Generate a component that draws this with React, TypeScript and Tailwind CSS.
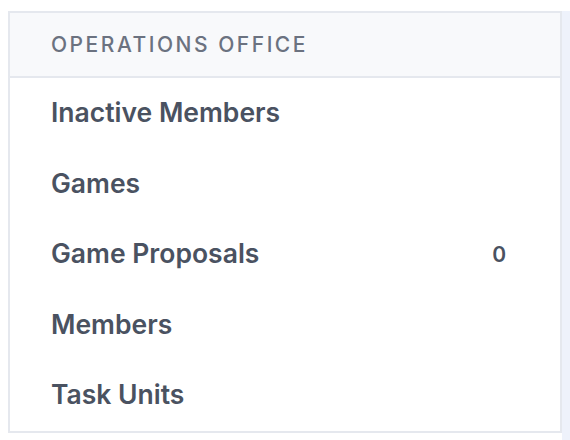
const items: { label: string; count?: number }[] = [
  { label: 'Inactive Members' },
  { label: 'Games' },
  { label: 'Game Proposals', count: 0 },
  { label: 'Members' },
  { label: 'Task Units' },
]

export default function App() {
  return (
    <div className="h-[440px] w-[570px] overflow-hidden bg-white pt-[11px] pl-[8px] font-['Inter',sans-serif]">
      <div className="flex h-full items-stretch">
        <section className="w-[554px] h-[422px] border-2 border-[#e5e8ee] bg-white">
          <header className="flex h-[65px] items-center border-b-2 border-[#e5e8ee] bg-[#f8f9fb] pl-[41px]">
            <h2 className="text-[21px] font-medium uppercase tracking-[0.12em] text-[#6b7280]">
              Operations Office
            </h2>
          </header>
          <ul>
            {items.map((item) => (
              <li
                key={item.label}
                className="flex h-[70.5px] items-center justify-between pl-[41px] pr-[54px]"
              >
                <span className="text-[26.5px] font-semibold text-[#4a5261]">{item.label}</span>
                {item.count !== undefined ? (
                  <span className="text-[21px] font-semibold text-[#4a5261]">{item.count}</span>
                ) : null}
              </li>
            ))}
          </ul>
        </section>
        <div className="flex-1 bg-[#eef2fb]" />
      </div>
    </div>
  )
}
